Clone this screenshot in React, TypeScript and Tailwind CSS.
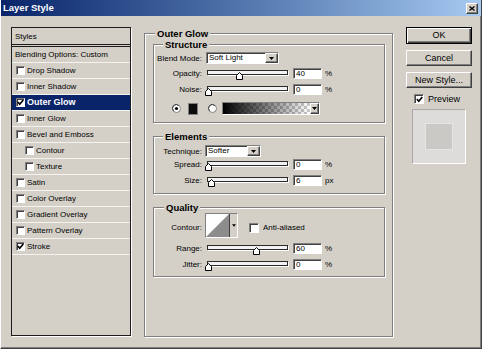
import React from "react";

const raised =
  "bg-[#d4d0c8] border-t border-l border-t-white border-l-white border-b border-r border-b-[#404040] border-r-[#404040] shadow-[inset_-1px_-1px_0_#808080]";
const sunken =
  "border-t border-l border-t-[#808080] border-l-[#808080] border-b border-r border-b-white border-r-white shadow-[inset_1px_1px_0_#404040]";

function Check({ checked, big }: { checked?: boolean; big?: boolean }) {
  return (
    <div
      className={`${big ? "w-[10px] h-[10px]" : "w-[9px] h-[9px]"} shrink-0 bg-white ${sunken} flex items-center justify-center`}
    >
      {checked && (
        <svg width="7" height="7" viewBox="0 0 7 7">
          <path d="M0.9 3.1 L2.7 5.2 L6.3 0.9" stroke="#000" strokeWidth="1.6" fill="none" />
        </svg>
      )}
    </div>
  );
}

function Tri({ w = 5 }: { w?: number }) {
  return (
    <svg width={w} height="3" viewBox="0 0 5 3">
      <path d="M0 0 H5 L2.5 3 Z" fill="#000" />
    </svg>
  );
}

function ArrowBtn({ cls }: { cls: string }) {
  return (
    <div className={`${raised} ${cls} flex items-center justify-center shrink-0`}>
      <Tri />
    </div>
  );
}

function Input({ value }: { value: string }) {
  return (
    <div className={`ml-[5px] w-[29px] h-[11px] bg-white ${sunken} pl-[2px] text-[8px] leading-[9px] shrink-0`}>
      {value}
    </div>
  );
}

function Slider({ pos }: { pos: number }) {
  return (
    <div className="relative ml-[5px] w-[81px] h-[11px] shrink-0">
      <div className="mt-[2px] h-[5px] border border-[#2a2a2a] bg-[#f2f2f2] shadow-[1px_1px_0_#fff]" />
      <svg className="absolute top-[4px]" style={{ left: pos }} width="7" height="8" viewBox="0 0 7 8">
        <path d="M3.5 0.5 L6.5 3.5 L6.5 7.5 L0.5 7.5 L0.5 3.5 Z" fill="#fff" stroke="#000" />
      </svg>
    </div>
  );
}

function SliderRow({
  label,
  value,
  unit,
  pos,
  cls,
}: {
  label: string;
  value: string;
  unit: string;
  pos: number;
  cls: string;
}) {
  return (
    <div className={`flex items-center h-[11px] ${cls}`}>
      <div className="w-[48px] text-right shrink-0">{label}</div>
      <Slider pos={pos} />
      <Input value={value} />
      <span className="ml-[3px] text-[8px]">{unit}</span>
    </div>
  );
}

function Group({
  title,
  cls,
  head,
  children,
}: {
  title: string;
  cls: string;
  head: string;
  children?: React.ReactNode;
}) {
  return (
    <div className={`border border-[#808080] shadow-[inset_1px_1px_0_#fff,1px_1px_0_#fff] ${cls}`}>
      <div className={`-mt-[6px] ${head} px-[2px] w-fit h-[11px] leading-[11px] bg-[#d4d0c8] font-bold text-[9.5px]`}>
        {title}
      </div>
      {children}
    </div>
  );
}

function Select({ text, w }: { text: string; w: string }) {
  return (
    <div className={`${w} h-[12px] bg-white ${sunken} flex items-center pl-[2px] shrink-0`}>
      <span className="leading-[10px]">{text}</span>
      <ArrowBtn cls="ml-auto w-[13px] h-full" />
    </div>
  );
}

function Radio({ on, cls = "" }: { on?: boolean; cls?: string }) {
  return (
    <svg className={`shrink-0 ${cls}`} width="9" height="9" viewBox="0 0 9 9">
      <circle cx="4.5" cy="4.5" r="4" fill="#fff" stroke="#808080" />
      <path d="M1.6 6.8 A3.6 3.6 0 0 1 6.8 1.6" stroke="#404040" fill="none" />
      {on && <circle cx="4.5" cy="4.5" r="1.6" fill="#000" />}
    </svg>
  );
}

const items: { label: string; checked?: boolean; selected?: boolean; indent?: boolean }[] = [
  { label: "Drop Shadow" },
  { label: "Inner Shadow" },
  { label: "Outer Glow", checked: true, selected: true },
  { label: "Inner Glow" },
  { label: "Bevel and Emboss" },
  { label: "Contour", indent: true },
  { label: "Texture", indent: true },
  { label: "Satin" },
  { label: "Color Overlay" },
  { label: "Gradient Overlay" },
  { label: "Pattern Overlay" },
  { label: "Stroke", checked: true },
];

export default function App() {
  return (
    <div className="w-[482px] h-[349px] bg-[#d4d0c8] border-l border-l-white border-r border-r-[#404040] border-b border-b-[#404040] shadow-[inset_0_-1px_0_#808080,inset_-1px_0_0_#808080] font-['Liberation_Sans',Arial,sans-serif] text-[8px] leading-[11px] text-black overflow-hidden">
      {/* Title bar */}
      <div className="h-[16px] bg-linear-to-r from-[#0a246a] to-[#a6caf0] flex items-center pl-[2px] pr-[3px]">
        <span className="text-white font-bold text-[9.5px] leading-[12px]">Layer Style</span>
        <div className={`ml-auto w-[12px] h-[11px] ${raised} flex items-center justify-center`}>
          <svg width="6" height="5" viewBox="0 0 6 5">
            <path d="M0.5 0.5 L5.5 4.5 M5.5 0.5 L0.5 4.5" stroke="#000" strokeWidth="1.3" />
          </svg>
        </div>
      </div>

      {/* Body */}
      <div className="flex items-start pt-[11px] pl-[10px]">
        {/* Styles list */}
        <div className="w-[120px] h-[309px] border border-[#1c1c1c] shadow-[1px_1px_0_#fff] shrink-0">
          <div className="h-[16px] pl-[3px] flex items-center border-b-[3px] border-double border-b-[#1c1c1c] box-content">
            Styles
          </div>
          <div className="h-[15px] pl-[3px] flex items-center border-b border-b-[#f4f3ef] box-content">
            Blending Options: Custom
          </div>
          {items.map((it) => (
            <div
              key={it.label}
              className={`h-[15px] flex items-center border-b border-b-[#f4f3ef] box-content ${
                it.indent ? "pl-[13px]" : "pl-[4px]"
              } ${it.selected ? "bg-[#0a246a] text-white font-bold text-[9px]" : ""}`}
            >
              <Check checked={it.checked} />
              <span className="ml-[2px]">{it.label}</span>
            </div>
          ))}
        </div>

        {/* Outer Glow group */}
        <Group title="Outer Glow" cls="ml-[13px] mt-[6px] w-[249px] h-[304px] shrink-0" head="ml-[10px]">
          {/* Structure */}
          <Group title="Structure" cls="ml-[8px] mt-[5px] w-[232px] h-[79px]" head="ml-[9px]">
            <div className="flex items-center h-[12px] mt-[2px]">
              <div className="w-[48px] text-right shrink-0">Blend Mode:</div>
              <div className="ml-[4px]">
                <Select text="Soft Light" w="w-[73px]" />
              </div>
            </div>
            <SliderRow label="Opacity:" value="40" unit="%" pos={29} cls="mt-[4px]" />
            <SliderRow label="Noise:" value="0" unit="%" pos={-2} cls="mt-[5px]" />
            <div className="flex items-center h-[13px] mt-[7px] pl-[18px]">
              <Radio on />
              <div className="ml-[7px] w-[10px] h-[12px] bg-[#0c0c0c] border border-[#808080] shrink-0" />
              <Radio cls="ml-[10px]" />
              <div className={`ml-[5px] w-[98px] h-[13px] ${sunken} flex shrink-0`}>
                <svg width="87" height="11" viewBox="0 0 87 11" className="shrink-0">
                  <defs>
                    <pattern id="chk" width="6" height="6" patternUnits="userSpaceOnUse">
                      <rect width="6" height="6" fill="#ffffff" />
                      <rect width="3" height="3" fill="#c8c8c8" />
                      <rect x="3" y="3" width="3" height="3" fill="#c8c8c8" />
                    </pattern>
                    <linearGradient id="fade" x1="0" x2="1" y1="0" y2="0">
                      <stop offset="0" stopColor="#000" />
                      <stop offset="1" stopColor="#000" stopOpacity="0" />
                    </linearGradient>
                  </defs>
                  <rect width="87" height="11" fill="url(#chk)" />
                  <rect width="87" height="11" fill="url(#fade)" />
                </svg>
                <ArrowBtn cls="w-[9px] h-[11px]" />
              </div>
            </div>
          </Group>

          {/* Elements */}
          <Group title="Elements" cls="ml-[8px] mt-[13px] w-[232px] h-[58px]" head="ml-[9px]">
            <div className="flex items-center h-[12px] mt-[3px]">
              <div className="w-[48px] text-right shrink-0">Technique:</div>
              <div className="ml-[3px]">
                <Select text="Softer" w="w-[56px]" />
              </div>
            </div>
            <SliderRow label="Spread:" value="0" unit="%" pos={-2} cls="mt-[2px]" />
            <SliderRow label="Size:" value="6" unit="px" pos={1} cls="mt-[5px]" />
          </Group>

          {/* Quality */}
          <Group title="Quality" cls="ml-[8px] mt-[13px] w-[232px] h-[70px]" head="ml-[10px]">
            <div className="flex items-start h-[25px]">
              <div className="w-[48px] text-right shrink-0 mt-[9px]">Contour:</div>
              <div className={`ml-[3px] w-[33px] h-[25px] ${sunken} bg-white flex shrink-0`}>
                <svg width="23" height="23" viewBox="0 0 23 23" className="shrink-0">
                  <rect width="23" height="23" fill="#fff" />
                  <path d="M0 23 L23 0 L23 23 Z" fill="#8c8c8c" />
                </svg>
                <div className="w-[1px] h-[23px] bg-[#404040] shrink-0" />
                <div className="w-[7px] h-[23px] bg-[#d4d0c8] flex items-center justify-center shrink-0">
                  <Tri w={4} />
                </div>
              </div>
              <div className="ml-[11px] mt-[9px] flex items-center">
                <Check big />
                <span className="ml-[4px]">Anti-aliased</span>
              </div>
            </div>
            <SliderRow label="Range:" value="60" unit="%" pos={46} cls="mt-[5px]" />
            <SliderRow label="Jitter:" value="0" unit="%" pos={-2} cls="mt-[5px]" />
          </Group>
        </Group>

        {/* Right column */}
        <div className="ml-[13px] w-[66px] flex flex-col text-[9px] shrink-0">
          <div className="h-[17px] border border-black bg-[#d4d0c8] flex items-center justify-center shadow-[inset_1px_1px_0_#fff,inset_-1px_-1px_0_#404040,inset_-2px_-2px_0_#808080]">
            OK
          </div>
          <div className={`mt-[6px] h-[16px] ${raised} flex items-center justify-center`}>Cancel</div>
          <div className={`mt-[6px] h-[16px] ${raised} flex items-center justify-center`}>New Style...</div>
          <div className="mt-[6px] h-[10px] ml-[8px] flex items-center">
            <Check checked big />
            <span className="ml-[4px] text-[9px]">Preview</span>
          </div>
          <div className="mt-[5px] ml-[6px] w-[54px] h-[55px] bg-[#dddcda] border-t border-l border-t-[#a8a8a8] border-l-[#a8a8a8] border-b border-r border-b-white border-r-white flex items-center justify-center">
            <div className="w-[28px] h-[27px] bg-[#cac9c6] border border-[#e6e5e2]" />
          </div>
        </div>
      </div>
    </div>
  );
}
